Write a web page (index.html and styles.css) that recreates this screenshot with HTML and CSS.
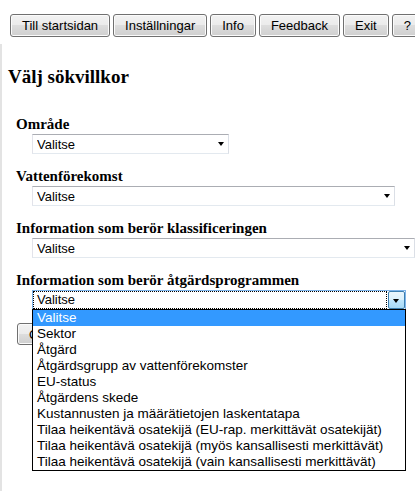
FILE: index.html
```html
<!DOCTYPE html>
<html lang="sv">
<head>
  <meta charset="UTF-8" />
  <title>Välj sökvillkor</title>
  <link rel="stylesheet" href="styles.css">
</head>
<body>

  <div class="top-bar">
    <button>Till startsidan</button>
    <button>Inställningar</button>
    <button>Info</button>
    <button>Feedback</button>
    <button>Exit</button>
    <button>?</button>
  </div>

  <div class="content">
    <h1>Välj sökvillkor</h1>

    <div class="field">
      <label for="omrade">Område</label>
      <span class="select-wrap w-omrade">
        <select id="omrade"><option>Valitse</option></select>
      </span>
    </div>

    <div class="field">
      <label for="vatten">Vattenförekomst</label>
      <span class="select-wrap w-vatten">
        <select id="vatten"><option>Valitse</option></select>
      </span>
    </div>

    <div class="field">
      <label for="klass">Information som berör klassificeringen</label>
      <span class="select-wrap w-klass">
        <select id="klass"><option>Valitse</option></select>
      </span>
    </div>

    <div class="field">
      <label>Information som berör åtgärdsprogrammen</label>
      <div class="combo">
        <span class="combo-value">Valitse</span>
        <span class="combo-btn"></span>

        <!-- öppen lista -->
        <ul class="combo-list">
          <li class="selected">Valitse</li>
          <li>Sektor</li>
          <li>Åtgärd</li>
          <li>Åtgärdsgrupp av vattenförekomster</li>
          <li>EU-status</li>
          <li>Åtgärdens skede</li>
          <li>Kustannusten ja määrätietojen laskentatapa</li>
          <li>Tilaa heikentävä osatekijä (EU-rap. merkittävät osatekijät)</li>
          <li>Tilaa heikentävä osatekijä (myös kansallisesti merkittävät)</li>
          <li>Tilaa heikentävä osatekijä (vain kansallisesti merkittävät)</li>
        </ul>
      </div>
    </div>

    <div class="actions">
      <button>OK</button>
    </div>
  </div>

</body>
</html>
```

FILE: styles.css
```css
body {
  margin: 0;
  font-family: "Liberation Sans", Arial, sans-serif;
  font-size: 13px;
  color: #000;
  background: #fff;
}

/* Knappar överst */
.top-bar {
  display: flex;
  gap: 3px;
  padding: 14px 0 0 10px;
  white-space: nowrap;
  overflow: hidden;
}

.top-bar button,
.actions button {
  flex-shrink: 0;
  height: 23px;
  padding: 0 11px;
  font-family: "Liberation Sans", Arial, sans-serif;
  font-size: 13px;
  color: #000;
  border: 1px solid #707070;
  border-radius: 3px;
  background: linear-gradient(#f2f2f2 0%, #ebebeb 50%, #dddddd 50%, #cfcfcf 100%);
  box-shadow: inset 0 0 0 1px #fbfbfb;
}

.content {
  margin-top: 7px;
  border-left: 2px solid #e3e3e3;
  padding: 22px 0 0 6px;
  min-height: 460px;
  box-sizing: border-box;
}

h1 {
  margin: 0 0 28px;
  font: bold 19px/21px "Liberation Serif", "Times New Roman", serif;
}

.field {
  margin: 0 0 13px 8px;
}

.field label {
  display: block;
  font: bold 15px/18px "Liberation Serif", "Times New Roman", serif;
}

/* Stängda listor */
.select-wrap {
  display: block;
  position: relative;
  margin: 1px 0 0 16px;
}

.select-wrap select {
  display: block;
  width: 100%;
  height: 20px;
  box-sizing: border-box;
  padding: 0 0 0 4px;
  -webkit-appearance: none;
  appearance: none;
  font-family: "Liberation Sans", Arial, sans-serif;
  font-size: 13px;
  color: #000;
  background: #fff;
  border: 1px solid;
  border-color: #abadb3 #dbdfe6 #e3e9ef #e2e3ea;
  border-radius: 0;
}

.select-wrap::after {
  content: "";
  position: absolute;
  right: 5px;
  top: 8px;
  border-left: 3.5px solid transparent;
  border-right: 3.5px solid transparent;
  border-top: 4px solid #000;
}

.w-omrade { width: 197px; }
.w-vatten { width: 363px; }
.w-klass { width: 383px; }

/* Öppen lista */
.combo {
  position: relative;
  display: flex;
  width: 374px;
  height: 20px;
  box-sizing: border-box;
  margin: 1px 0 0 16px;
  border: 1px solid #7eb4ea;
  background: #fff;
}

.combo-value {
  flex-grow: 1;
  margin-right: 1px;
  padding-left: 3px;
  line-height: 16px;
  border: 1px dotted #000;
}

.combo-btn {
  position: relative;
  width: 15px;
  border: 1px solid #3c7fb1;
  border-radius: 2px;
  background: linear-gradient(#eaf6fd 0%, #d9f0fc 50%, #bee6fd 50%, #a7d9f5 100%);
}

.combo-btn::after {
  content: "";
  position: absolute;
  left: 4px;
  top: 7px;
  border-left: 3.5px solid transparent;
  border-right: 3.5px solid transparent;
  border-top: 4px solid #000;
}

.combo-list {
  position: absolute;
  top: 100%;
  left: -1px;
  width: 374px;
  box-sizing: border-box;
  margin: 0;
  padding: 0;
  list-style: none;
  background: #fff;
  border: 1px solid #000;
  z-index: 10;
}

.combo-list li {
  height: 16px;
  line-height: 16px;
  padding-left: 4px;
  font-size: 13.5px;
  white-space: nowrap;
}

.combo-list li.selected {
  background: #3399ff;
  color: #fff;
}

.actions {
  padding-left: 9px;
}

.actions button {
  height: 22px;
}
```
